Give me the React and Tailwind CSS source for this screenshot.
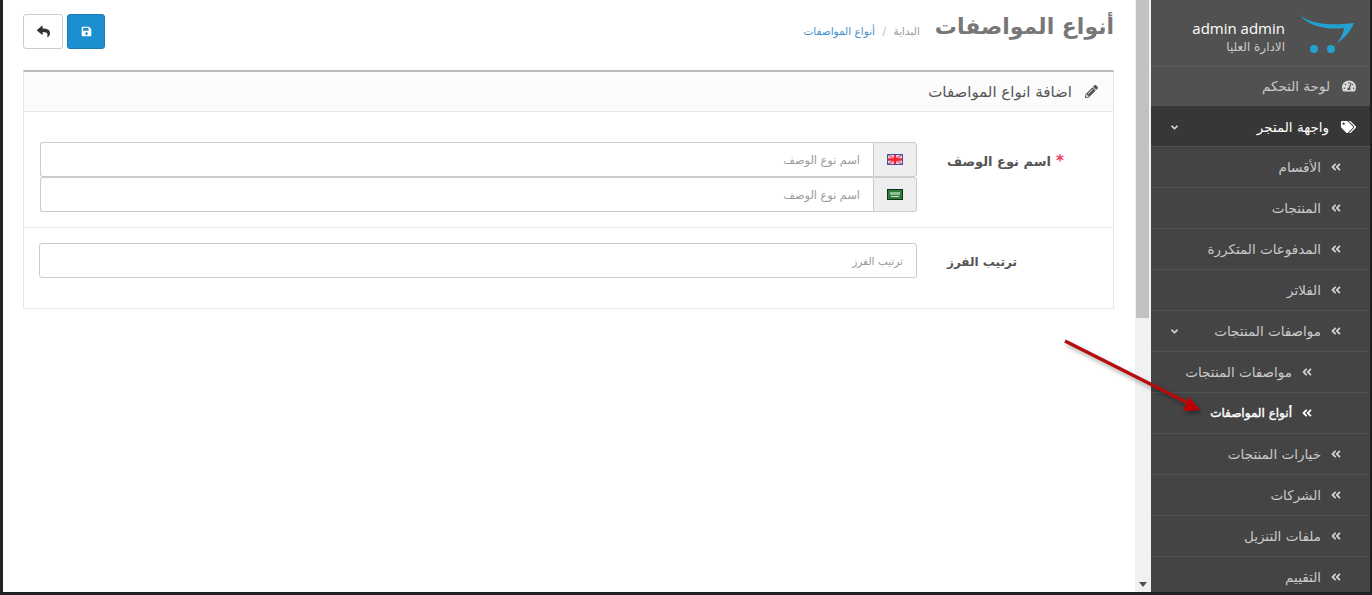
import { FaReply, FaSave, FaPencilAlt, FaAngleDown, FaAngleDoubleLeft, FaTags, FaTachometerAlt } from 'react-icons/fa';

function NavRow({ label, level = 0, active, open, icon, dark }) {
  return (
    <div className={`h-[41px] flex items-center border-b border-[#515151] ${active ? 'text-[12px] text-white [-webkit-text-stroke:0.4px_white]' : dark ? 'pt-[2px] text-[13.5px] text-white' : 'text-[13.5px] text-[#c9c9c9]'} ${dark ? 'bg-[#373737]' : ''}`}>
      <div className={`flex items-center ${icon ? 'pr-[14px] gap-[12px]' : level === 1 ? 'pr-[58px] gap-[10px]' : 'pr-[29px] gap-[10px]'}`}>
        {icon ? icon : <FaAngleDoubleLeft className={`w-[10px] h-[12px] ${active ? 'text-white' : 'text-[#d0d0d0]'}`} />}
        <span className="whitespace-nowrap">{label}</span>
      </div>
      {open && <FaAngleDown className="absolute left-[18px] w-[11px] h-[11px] text-[#d0d0d0]" />}
    </div>
  );
}

function Flag({ type }) {
  if (type === 'en') {
    return (
      <svg width="16" height="11" viewBox="0 0 16 11">
        <rect width="16" height="11" fill="#e4d8e8" />
        <path d="M0 0L16 11M16 0L0 11" stroke="#e86a78" strokeWidth="1.6" />
        <path d="M8 0V11M0 5.5H16" stroke="#ee2233" strokeWidth="2.4" />
        <rect x="0.5" y="0.5" width="15" height="10" fill="none" stroke="#4450a8" />
      </svg>
    );
  }
  return (
    <svg width="16" height="11" viewBox="0 0 16 11">
      <rect width="16" height="11" fill="#2f7d3a" />
      <rect x="3" y="3" width="10" height="3" fill="#8fbb96" />
      <rect x="4" y="7" width="8" height="1" fill="#cfe3d2" />
      <rect x="0.5" y="0.5" width="15" height="10" fill="none" stroke="#10301a" />
    </svg>
  );
}

function LangInput({ flag }) {
  return (
    <div className="flex h-[35px] w-[877px]">
      <div className="w-[44px] shrink-0 flex items-center justify-center bg-[#eeeeee] border border-[#cccccc] rounded-r-[3px]">
        <Flag type={flag} />
      </div>
      <div className="flex-1 flex items-center border border-r-0 border-[#cccccc] rounded-l-[3px] pr-[13px] pt-[3px] text-[11.3px] text-[#999999]">
        اسم نوع الوصف
      </div>
    </div>
  );
}

export default function App() {
  return (
    <div dir="rtl" className="relative w-[1372px] h-[595px] overflow-hidden flex bg-[#222222] border-l-[3px] border-b-[3px] border-r-[2px] border-[#222222] font-['DejaVu_Sans','Open_Sans',sans-serif]">
      {/* Sidebar */}
      <aside className="w-[219px] shrink-0 bg-[#444444] overflow-hidden relative">
        <div className="h-[67px] bg-[#515151] border-b border-[#5d5d5d] flex items-center pr-[16px] gap-[15px]">
          <svg width="54" height="40" viewBox="0 0 54 40" className="mt-[3px]">
            <path d="M0 0C10 9 30 11 54 8C50 18 42 25 37 28C42 21 44 16 44 13C28 15 9 12 0 0Z" fill="#23a1d1" />
            <circle cx="14" cy="34" r="4" fill="#23a1d1" />
            <circle cx="31" cy="34" r="4" fill="#23a1d1" />
          </svg>
          <div className="pt-[9px]">
            <div className="text-[15px] leading-[19px] text-white font-['Open_Sans',sans-serif]" dir="ltr">admin admin</div>
            <div className="text-[12px] leading-[18px] text-[#c9c9c9]">الادارة العليا</div>
          </div>
        </div>
        <div className="h-[39px] bg-[#515151] flex items-center pr-[14px] gap-[12px] text-[13.5px] text-[#c9c9c9] border-b border-[#515151]">
          <FaTachometerAlt className="w-[14px] h-[14px] text-[#d8d8d8]" />
          <span>لوحة التحكم</span>
        </div>
        <NavRow label="واجهة المتجر" dark open icon={<FaTags className="w-[15px] h-[14px] text-white" />} />
        <NavRow label="الأقسام" />
        <NavRow label="المنتجات" />
        <NavRow label="المدفوعات المتكررة" />
        <NavRow label="الفلاتر" />
        <NavRow label="مواصفات المنتجات" open />
        <NavRow label="مواصفات المنتجات" level={1} />
        <NavRow label="أنواع المواصفات" level={1} active />
        <NavRow label="خيارات المنتجات" />
        <NavRow label="الشركات" />
        <NavRow label="ملفات التنزيل" />
        <NavRow label="التقييم" />
      </aside>

      {/* Scrollbar */}
      <div className="w-[16px] shrink-0 bg-[#f1f1f1] flex flex-col justify-between">
        <div className="w-[13px] h-[318px] mr-[2px] bg-[#c1c1c1]" />
        <div className="mb-[5px] mr-[4px] w-0 h-0 border-l-[4px] border-r-[4px] border-t-[5px] border-l-transparent border-r-transparent border-t-[#505050]" />
      </div>

      {/* Content */}
      <main className="flex-1 bg-white pr-[21px] pl-[20px]">
        <header className="h-[70px] flex items-start justify-between">
          <div className="flex items-center gap-[15px] pt-[9px]">
            <h1 className="text-[22px] leading-[36px] font-bold text-[#777777]">أنواع المواصفات</h1>
            <div className="flex items-center gap-[7.5px] text-[10.5px] pt-[10px]">
              <span className="text-[#999999]">البداية</span>
              <span className="text-[#bbbbbb]">/</span>
              <span className="text-[#4a90c8]">أنواع المواصفات</span>
            </div>
          </div>
          <div className="flex gap-[4px] pt-[14px]">
            <button className="w-[38px] h-[35px] bg-[#1b8fd0] border border-[#1a7cb5] rounded-[3px] flex items-center justify-center">
              <FaSave className="w-[11px] h-[11px] text-white" />
            </button>
            <button className="w-[40px] h-[35px] bg-white border border-[#cccccc] rounded-[3px] flex items-center justify-center">
              <FaReply className="w-[13px] h-[13px] text-[#333333]" />
            </button>
          </div>
        </header>

        <section className="border border-[#e6e6e6] border-t-2 border-t-[#bbbbbb] h-[239px]">
          <div className="h-[40px] bg-[#fbfbfb] border-b border-[#e6e6e6] flex items-center pr-[15px] gap-[13px] text-[15px] text-[#555555]">
            <FaPencilAlt className="w-[13px] h-[13px] text-[#555555]" />
            <span className="pt-[1px]">اضافة انواع المواصفات</span>
          </div>
          <div className="flex h-[116px] border-b border-[#eeeeee] pt-[30px]">
            <div className="w-[196px] pl-[30px] text-left text-[13px] font-bold text-[#555555] leading-[38px] whitespace-nowrap h-[36px]">
              <span className="text-[#f03a5f] text-[15px] ml-[5px]">*</span>
              اسم نوع الوصف
            </div>
            <div className="flex flex-col">
              <LangInput flag="en" />
              <LangInput flag="sa" />
            </div>
          </div>
          <div className="flex pt-[15px]">
            <div className="w-[196px] pl-[30px] text-left text-[12px] font-bold text-[#555555] leading-[38px] whitespace-nowrap">
              ترتيب الفرز
            </div>
            <div className="w-[878px] h-[35px] border border-[#cccccc] rounded-[3px] flex items-center pr-[13px] pt-[3px] text-[10.5px] text-[#999999]">
              ترتيب الفرز
            </div>
          </div>
        </section>
      </main>

      {/* Annotation arrow drawn over the screenshot */}
      <svg className="absolute left-[-3px] top-0 pointer-events-none drop-shadow-[2px_3px_2px_rgba(0,0,0,0.35)]" width="1372" height="595" viewBox="0 0 1372 595">
        <line x1="1065" y1="341" x2="1192" y2="405" stroke="#b50d0d" strokeWidth="3.5" />
        <polygon points="1183,411 1200,410 1189,397" fill="#c00000" />
      </svg>
    </div>
  );
}
